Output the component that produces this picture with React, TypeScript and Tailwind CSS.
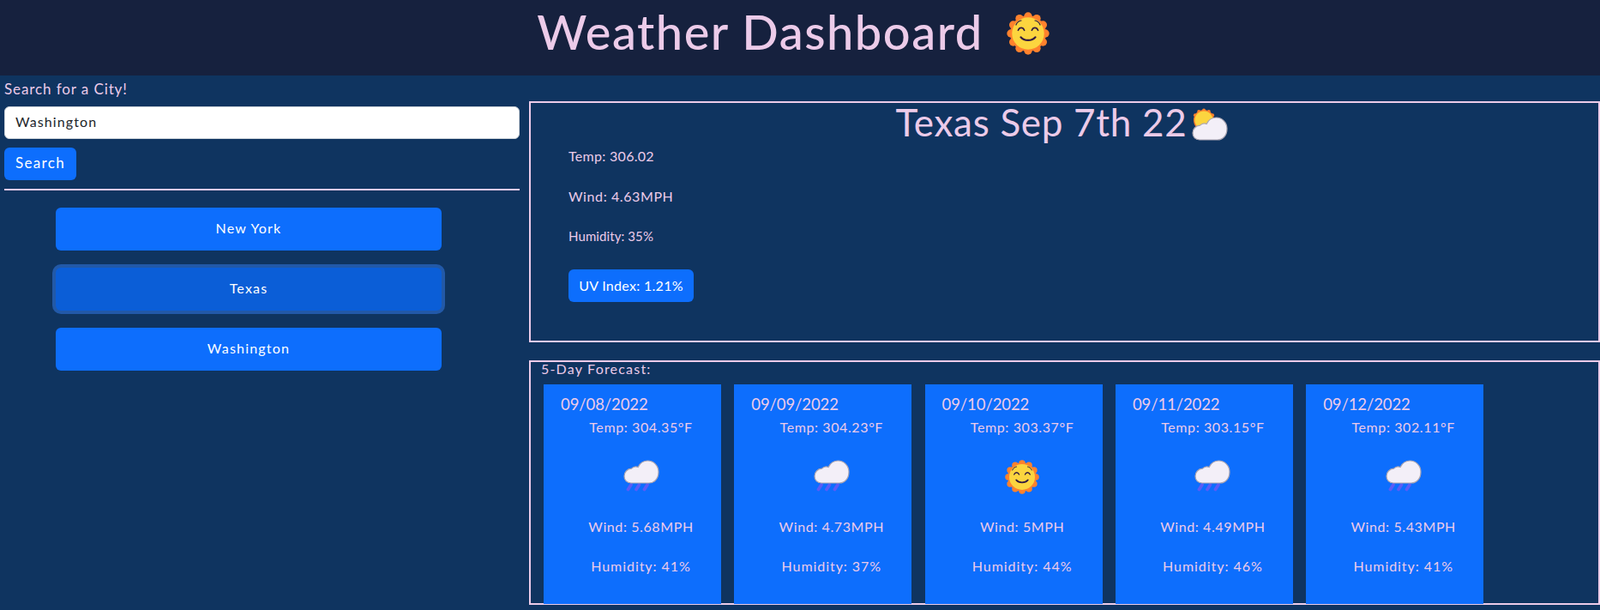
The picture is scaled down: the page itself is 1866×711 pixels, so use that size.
import React from "react";

type Day = {
  date: string;
  temp: string;
  wind: string;
  humidity: string;
  icon: "rain" | "sun";
};

const days: Day[] = [
  { date: "09/08/2022", temp: "304.35", wind: "5.68", humidity: "41", icon: "rain" },
  { date: "09/09/2022", temp: "304.23", wind: "4.73", humidity: "37", icon: "rain" },
  { date: "09/10/2022", temp: "303.37", wind: "5", humidity: "44", icon: "sun" },
  { date: "09/11/2022", temp: "303.15", wind: "4.49", humidity: "46", icon: "rain" },
  { date: "09/12/2022", temp: "302.11", wind: "5.43", humidity: "41", icon: "rain" },
];

const cities = ["New York", "Texas", "Washington"];

const cloudPath =
  "M9 27C4 27 1 23.5 1 19C1 14.5 4.5 10.5 9.5 10.2C12 7.6 15 7.6 17.2 8.4C19.5 3.5 24 1 28.5 1C35.5 1 41 7 41 14C41 22 36 27 30 27Z";

const SunIcon = ({ size }: { size: number }) => (
  <svg width={size} height={size} viewBox="0 0 32 32">
    {Array.from({ length: 12 }).map((_, i) => {
      const a = (i * Math.PI) / 6;
      return <circle key={i} cx={16 + 12.8 * Math.sin(a)} cy={16 - 12.8 * Math.cos(a)} r="3" fill="#ff822d" />;
    })}
    <circle cx="16" cy="16" r="13.4" fill="#ff822d" />
    <circle cx="16" cy="16" r="12" fill="#fcd53f" />
    <g fill="none" stroke="#321b41" strokeLinecap="round">
      <path d="M7 9.6C7.8 7.6 9.2 6.6 10.8 6.4" strokeWidth="0.8" />
      <path d="M25 9.6C24.2 7.6 22.8 6.6 21.2 6.4" strokeWidth="0.8" />
      <path d="M8.6 13.6C9.6 11.2 12.2 11.2 13.2 13.6" strokeWidth="1.1" />
      <path d="M18.8 13.6C19.8 11.2 22.4 11.2 23.4 13.6" strokeWidth="1.1" />
      <path d="M10.6 18.8C13 21.8 19 21.8 21.4 18.8" strokeWidth="1.5" />
    </g>
  </svg>
);

const RainIcon = () => (
  <svg width="42" height="37" viewBox="0 0 42 37" className="mb-[3px]">
    <g stroke="#5c5cf6" strokeWidth="3.8" strokeLinecap="round">
      <path d="M5.5 34.5L9 29" />
      <path d="M15 34.5L18.5 29" />
      <path d="M24.5 34.5L28 29" />
    </g>
    <path d={cloudPath} fill="#f3eff8" stroke="#aba6b2" strokeWidth="1.2" />
  </svg>
);

const CloudSunIcon = () => (
  <svg width="44" height="38" viewBox="0 0 44 38" className="ml-[5px]">
    {Array.from({ length: 9 }).map((_, i) => {
      const a = -Math.PI / 2 + (i * Math.PI) / 6 - Math.PI / 3;
      return <circle key={i} cx={15 + 11.6 * Math.cos(a)} cy={14 + 11.6 * Math.sin(a)} r="2" fill="#ff822d" />;
    })}
    <circle cx="15" cy="14" r="12" fill="#ff822d" />
    <circle cx="15" cy="14" r="10.6" fill="#fcd53f" />
    <g transform="translate(1 10)">
      <path d={cloudPath} fill="#f3eff8" stroke="#aba6b2" strokeWidth="1.2" />
    </g>
  </svg>
);

const ForecastCard = ({ day }: { day: Day }) => (
  <div className="w-[207px] h-[256px] shrink-0 bg-[#0d6efd] pl-5 pt-[10px] text-[#eccbe9]">
    <p className="text-[18.5px] leading-[27px] -tracking-[0.1px]">{day.date}</p>
    <div className="flex flex-col items-center text-[16px] leading-6 tracking-[0.6px]">
      <p className="mt-[1px]">Temp: {day.temp}°F</p>
      <div className="h-[92px] flex items-center justify-center">
        {day.icon === "sun" ? <SunIcon size={40} /> : <RainIcon />}
      </div>
      <p>Wind: {day.wind}MPH</p>
      <p className="mt-[22px] tracking-[0.95px]">Humidity: {day.humidity}%</p>
    </div>
  </div>
);

const App = () => {
  return (
    <div className="h-[711px] bg-[#0f3460] font-['Lato',sans-serif] text-[#eccbe9] overflow-hidden">
      <header className="h-[88px] bg-[#16213e] flex items-center justify-center pr-[16px] pb-[10px]">
        <h1 className="text-[56px] leading-none font-medium tracking-[1.5px] mr-[27px] pb-[4px]">Weather Dashboard</h1>
        <SunIcon size={50} />
      </header>

      <main className="flex">
        <aside className="w-[606px] shrink-0 pl-[5px] pt-[4px]">
          <label className="block text-[17px] leading-6 tracking-[0.9px]">Search for a City!</label>
          <input
            readOnly
            value="Washington"
            className="block mt-[8px] w-[601px] h-[38px] rounded-md bg-white border border-[#ced4da] px-3 pb-[3px] text-[16px] tracking-[1.1px] text-[#212529]"
          />
          <button className="block mt-[10px] h-[38px] w-[84px] rounded-md bg-[#0d6efd] pb-[2px] text-white text-[17px] tracking-[1.3px]">
            Search
          </button>
          <hr className="mt-[10px] w-[601px] border-t-2 border-[#eccbe9]" />
          <div className="mt-5 ml-[60px] w-[450px] flex flex-col gap-5">
            {cities.map((city) => (
              <button
                key={city}
                className={
                  city === "Texas"
                    ? "h-[50px] rounded-md bg-[#0b5ed7] pb-[3px] text-white text-[16px] tracking-[1.2px] ring-4 ring-[#2259a8]"
                    : "h-[50px] rounded-md bg-[#0d6efd] pb-[3px] text-white text-[16px] tracking-[1.2px]"
                }
              >
                {city}
              </button>
            ))}
          </div>
        </aside>

        <section className="flex-1 ml-[11px] pt-[30px]">
          <div className="h-[281px] border-2 border-[#eccbe9]">
            <div className="flex items-center justify-center h-[50px] pr-[5px]">
              <h2 className="text-[44px] leading-[50px] pb-[6px] font-normal tracking-[0.7px]">Texas Sep 7th 22</h2>
              <CloudSunIcon />
            </div>
            <div className="pl-[44px] text-[16px] leading-6 tracking-[0.3px]">
              <p>Temp: 306.02</p>
              <p className="mt-[23px] tracking-[0.6px]">Wind: 4.63MPH</p>
              <p className="mt-[22px] text-[15px] tracking-[0.1px]">Humidity: 35%</p>
              <button className="block mt-[27px] h-[38px] w-[146px] rounded-md bg-[#0d6efd] pb-[1px] text-white text-[16px] tracking-[0.3px]">
                UV Index: 1.21%
              </button>
            </div>
          </div>

          <div className="mt-[21px] h-[285px] border-2 border-[#eccbe9]">
            <p className="h-[26px] pl-[12px] text-[16px] leading-[16px] tracking-[1.2px]">5-Day Forecast:</p>
            <div className="flex gap-[15.3px] pl-[15px]">
              {days.map((day) => (
                <ForecastCard key={day.date} day={day} />
              ))}
            </div>
          </div>
        </section>
      </main>
    </div>
  );
};

export default App;
